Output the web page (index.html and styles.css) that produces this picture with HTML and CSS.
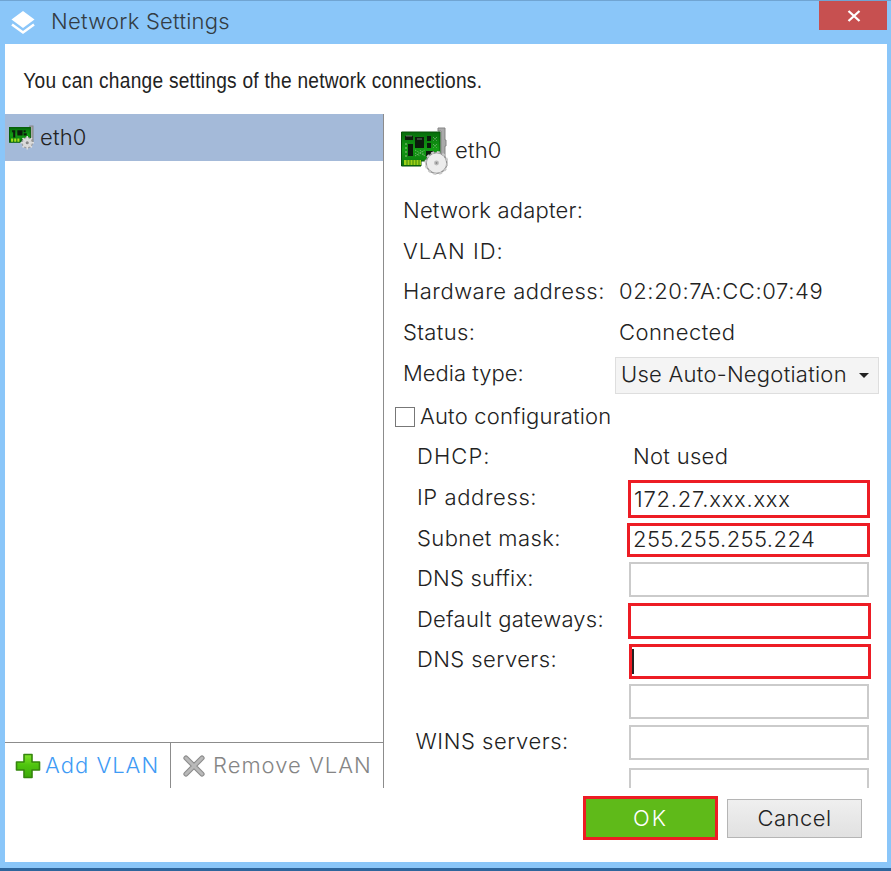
FILE: index.html
```html
<!DOCTYPE html>
<html lang="en">
<head>
<meta charset="utf-8">
<title>Network Settings</title>
<link rel="stylesheet" href="styles.css">
</head>
<body>
<svg class="defs" width="0" height="0" aria-hidden="true">
  <defs>
    <linearGradient id="board" x1="0" y1="0" x2="0" y2="1"><stop offset="0" stop-color="#066b0b"/><stop offset=".5" stop-color="#139c14"/><stop offset="1" stop-color="#0a750d"/></linearGradient>
    <linearGradient id="plus" x1="0" y1="0" x2="0" y2="1"><stop offset="0" stop-color="#83e52c"/><stop offset=".45" stop-color="#4fc50e"/><stop offset="1" stop-color="#3caa08"/></linearGradient>
    <symbol id="card" viewBox="0 0 48 48">
      <path d="M40 1h5v12h1v6h-1v13h-4V4h-3V1z" fill="#aaa" stroke="#858585"/>
      <path d="M1.500 5h38.500v29H21v5H1.500z" fill="url(#board)" stroke="#075009"/>
      <path d="M5 9h8v4H5zM15 10h9v11h-9zM27 9h4v5h-4zM27 16h4v5h-4zM8 17h5v12H8zM26 24h8v6h-8z" fill="#0b1b0c"/>
      <path d="M17 12h5M6 9h6" stroke="#667568"/>
      <path d="M33 10l4 4M37 10l-4 4M33 17l4 4M37 17l-4 4M15 23l10 6M15 29l10-6M20 23l5 6M15 26l5 3" stroke="#7eb879" stroke-dasharray="1 1"/>
      <path d="M6 16v14" stroke="#92c27f" stroke-dasharray="2 2"/>
      <path d="M4 33h17v5H4z" fill="#9bd018"/>
      <path d="M7 33v5M10 33v5M13 33v5M16 33v5M19 33v5" stroke="#39870d"/>
      <circle cx="36.500" cy="36" r="10.300" fill="#e6e6e6" stroke="#959595" stroke-width="1.500"/>
      <circle cx="36.500" cy="36" r="11" fill="none" stroke="#c9c9c9" stroke-width="2" stroke-dasharray="3 2.760"/>
      <circle cx="36.500" cy="36" r="9.500" fill="#ececec"/>
      <circle cx="36.500" cy="36" r="1.700" fill="#888" stroke="#bbb" stroke-width="1.500"/>
    </symbol>
    <symbol id="card-small" viewBox="0 0 24 24">
      <path d="M20 1h3v15h-3z" fill="#aaa" stroke="#858585"/>
      <path d="M.5 2.500h20v12h-9v2H.5z" fill="url(#board)" stroke="#076009"/>
      <path d="M3 5h3v2H3zM4 7h2v5H4zM8 5h5v5H8zM14 5h2v2h-2zM14 8h3v2h-3z" fill="#0b1b0c"/>
      <path d="M2 14.500h9" stroke="#a5dc1d" stroke-width="3" stroke-dasharray="2 1"/>
      <circle cx="17.500" cy="17" r="5" fill="#d5d5d5" stroke="#9b9b9b"/>
      <path d="M17.500 10.500v13M11 17h13M13 12.500l9 9M22 12.500l-9 9" stroke="#ddd" stroke-width="1.500"/>
      <circle cx="17.500" cy="17" r="1.500" fill="#888"/>
    </symbol>
  </defs>
</svg>
<div class="window">
  <header class="titlebar">
    <svg class="logo" width="24" height="24" viewBox="0 0 24 24"><path d="M12 0L23.500 8.500 12 17 .5 8.500z" fill="#fff"/><path d="M1 13.500l11 8 11-8" fill="none" stroke="#fff" stroke-width="2.600"/></svg>
    <h1 class="title">Network Settings</h1>
    <button class="close" aria-label="Close"><svg width="14" height="12" viewBox="0 0 14 12"><path d="M1.500 1l11 10M12.500 1l-11 10" stroke="#fff" stroke-width="2.300"/></svg></button>
  </header>
  <main class="content">
    <p class="intro">You can change settings of the network connections.</p>
    <div class="panes">
      <section class="sidebar">
        <div class="list">
          <div class="item"><svg width="25" height="25"><use href="#card-small"/></svg><span class="eth">eth0</span></div>
        </div>
        <div class="toolbar">
          <div class="tool add"><svg width="26" height="26" viewBox="0 0 26 26"><path d="M9 1.500h8V9h7.500v8H17v7.500H9V17H1.500V9H9z" fill="url(#plus)" stroke="#35860d" stroke-width="1.600" stroke-linejoin="round"/></svg><span class="add-text">Add VLAN</span></div>
          <div class="tool remove"><svg width="22" height="22" viewBox="0 0 22 22"><path d="M3 3l16 16M19 3L3 19" stroke="#8c8c8c" stroke-width="5.200" stroke-linecap="round"/><path d="M3 3l16 16M19 3L3 19" stroke="#b9b9b9" stroke-width="3" stroke-linecap="round"/></svg><span class="remove-text">Remove VLAN</span></div>
        </div>
      </section>
      <section class="details">
        <div class="heading"><svg width="48" height="48"><use href="#card"/></svg><span class="eth">eth0</span></div>
        <div class="row"><span class="label adapter">Network adapter:</span></div>
        <div class="row"><span class="label vlan">VLAN ID:</span></div>
        <div class="row"><span class="label hardware">Hardware address:</span><span class="value mac">02:20:7A:CC:07:49</span></div>
        <div class="row"><span class="label status">Status:</span><span class="value connected">Connected</span></div>
        <div class="row"><span class="label media">Media type:</span><div class="select"><span class="auto-neg">Use Auto-Negotiation</span><i class="arrow"></i></div></div>
        <div class="check-row"><i class="checkbox"></i><span class="autoconf">Auto configuration</span></div>
        <div class="fields">
          <div class="row"><span class="label dhcp">DHCP:</span><span class="value not-used">Not used</span></div>
          <div class="row"><span class="label ip">IP address:</span><div class="input marked ip-box"><span class="ip-value">172.27.xxx.xxx</span></div></div>
          <div class="row"><span class="label subnet">Subnet mask:</span><div class="input marked mask-box"><span class="mask-value">255.255.255.224</span></div></div>
          <div class="row"><span class="label suffix">DNS suffix:</span><div class="input"></div></div>
          <div class="row"><span class="label gateways">Default gateways:</span><div class="input marked gateway-box"></div></div>
          <div class="row"><span class="label dns">DNS servers:</span><div class="input marked dns-box"><i class="caret"></i></div></div>
          <div class="row"><span class="label"></span><div class="input second-dns"></div></div>
          <div class="row"><span class="label wins">WINS servers:</span><div class="input"></div></div>
          <div class="row"><span class="label"></span><div class="input last"></div></div>
        </div>
      </section>
    </div>
    <footer class="actions"><button class="ok">OK</button><button class="cancel">Cancel</button></footer>
  </main>
</div>
</body>
</html>
```
FILE: styles.css
```css
* { box-sizing: border-box; }
body { margin: 0; width: 891px; height: 871px; overflow: hidden; font: 300 22px/28px Inter, "Liberation Sans", sans-serif; color: #222; }
.defs { position: absolute; }
span, h1, p { white-space: nowrap; }
svg { flex: none; }
.window { height: 871px; padding: 0 4px 0 5px; background: #8ac6f9; border-top: 1px solid #70a4d2; border-bottom: 3px solid #2e659c; }
.titlebar { height: 43px; display: flex; align-items: flex-start; padding-left: 6px; }
.logo { margin-top: 10px; }
.title { margin: 6px 0 0 16px; font-size: 22px; font-weight: 300; line-height: 28px; letter-spacing: .25px; color: #333c44; }
.close { margin-left: auto; width: 68px; height: 29px; padding: 0 0 0 1px; border: 0; background: #c75050; display: flex; align-items: center; justify-content: center; }
.content { height: 818px; background: #fff; overflow: hidden; }
.intro { margin: 0; width: 560px; height: 70px; padding: 23px 0 0 21px; font: 400 22px/28px "Liberation Sans", sans-serif; letter-spacing: .3px; transform: scaleX(.869); transform-origin: 0 0; }
.panes { height: 674px; display: flex; overflow: hidden; }
.sidebar { width: 379px; border-right: 1px solid #8c8c8c; display: flex; flex-direction: column; }
.list { flex: 1; }
.item { height: 47px; background: #a4bad9; display: flex; align-items: center; padding-left: 4px; gap: 6px; }
.item .eth { padding-bottom: 2px; }
.eth { letter-spacing: .2px; }
.toolbar { height: 46px; border-top: 1px solid #8c8c8c; display: flex; }
.tool { display: flex; align-items: center; }
.tool span { padding-bottom: 1px; }
.add { width: 166px; padding-left: 10px; gap: 4px; color: #3f9bf5; border-right: 1px solid #8c8c8c; }
.add-text { letter-spacing: 1px; }
.remove { padding-left: 12px; gap: 8px; color: #858585; }
.remove-text { letter-spacing: 1px; }
.details { flex: 1; padding-left: 12px; }
.heading { height: 77px; padding: 13px 0 0 4px; display: flex; gap: 7px; }
.heading .eth { margin-top: 9px; }
.row { height: 40.5px; display: flex; align-items: center; padding-left: 7px; }
.label { width: 216px; flex: none; padding-bottom: 2px; }
.value { padding-bottom: 2px; }
.adapter { letter-spacing: .2px; }
.vlan { letter-spacing: 1px; }
.hardware { letter-spacing: .5px; }
.mac { letter-spacing: .62px; }
.status { letter-spacing: .35px; }
.connected { letter-spacing: .45px; }
.media { padding-bottom: 1px; }
.select { width: 264px; height: 37px; margin: 4px 0 0 -4px; padding: 0 9px 0 5px; display: flex; align-items: center; justify-content: space-between; background: #f4f4f4; border: 1px solid #dedede; flex: none; }
.auto-neg { letter-spacing: .25px; padding-bottom: 2px; }
.arrow { border: solid transparent; border-width: 5px 5px 0; border-top-color: #222; }
.check-row { height: 43.500px; display: flex; align-items: center; gap: 5px; }
.checkbox { width: 20px; height: 20px; border: 1px solid #777; margin-top: 4px; margin-left: -1px; }
.autoconf { letter-spacing: .17px; padding-top: 2px; }
.fields { padding-left: 14px; }
.fields .row { height: 40.7px; }
.fields .label { width: 212px; }
.dhcp { letter-spacing: 1.1px; }
.ip { letter-spacing: .6px; }
.subnet { letter-spacing: .4px; }
.suffix { letter-spacing: .2px; }
.gateways { letter-spacing: .25px; padding-bottom: 3px; }
.dns { letter-spacing: .42px; padding-bottom: 4px; }
.wins { letter-spacing: .55px; text-indent: -1.5px; }
.not-used { margin-left: 4px; letter-spacing: .3px; }
.ip-value { letter-spacing: .75px; }
.mask-value { letter-spacing: .4px; padding-bottom: 2px; }
.input { width: 240px; height: 35px; border: 2px solid #cbcbcb; display: flex; align-items: center; padding-left: 3px; flex: none; }
.marked { border: 3px solid #ed1c24; }
.ip-box { width: 242px; height: 38px; margin-left: -1px; margin-top: 2px; }
.mask-box { width: 243px; height: 34px; margin-left: -2px; margin-top: 3px; }
.gateway-box { width: 243px; height: 36px; margin-left: -1px; margin-top: 2px; }
.dns-box { width: 242px; height: 35px; margin-top: 1px; padding-left: 0; }
.second-dns { margin-top: 1px; }
.caret { width: 2px; height: 25px; background: #222; }
.last { margin-top: 5px; }
.actions { display: flex; gap: 9px; padding: 8px 0 0 578px; }
.actions button { font: 300 22px/28px Inter, "Liberation Sans", sans-serif; padding: 0; }
.actions .ok { width: 135px; height: 44px; background: #5fba19; color: #fff; border: 3px solid #ed1c24; letter-spacing: 2px; }
.actions .cancel { width: 135px; height: 39px; margin-top: 3px; padding-bottom: 2px; color: #222; background: linear-gradient(#efefef, #e1e1e1); border: 1px solid #b5b5b5; letter-spacing: .5px; }
```
